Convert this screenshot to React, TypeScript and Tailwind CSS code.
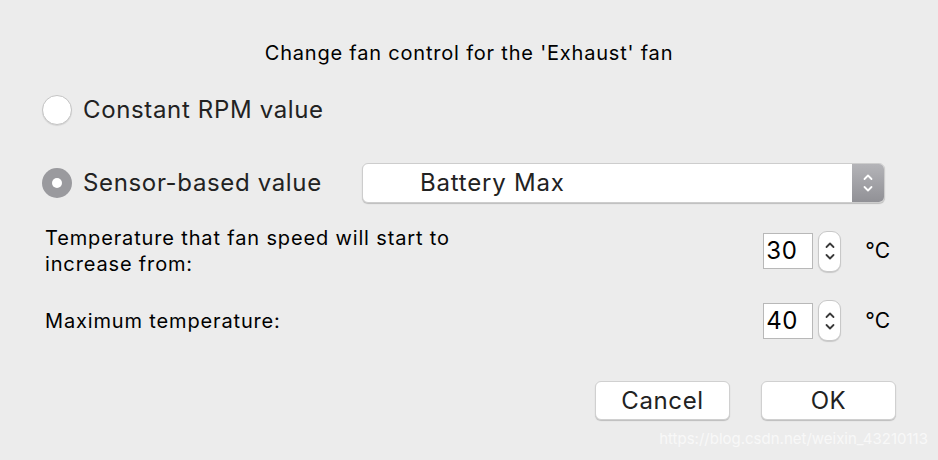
import { useState } from 'react';

function Stepper({ className = '' }: { className?: string }) {
  return (
    <div className={`flex items-center justify-center ${className}`}>
      <svg width="12" height="26" viewBox="0 0 12 26" fill="none" strokeLinecap="round" strokeLinejoin="round">
        <path d="M2.5 9 L6 5.5 L9.5 9" stroke="currentColor" strokeWidth="1.8" />
        <path d="M2.5 17 L6 20.5 L9.5 17" stroke="currentColor" strokeWidth="1.8" />
      </svg>
    </div>
  );
}

function NumberField({ value }: { value: string }) {
  return (
    <div className="flex items-center">
      <div className="w-[50px] h-[36px] bg-white border border-[#b8b8b8] flex items-center pl-[2px] text-[24px] tracking-[0.5px] text-black">
        {value}
      </div>
      <Stepper className="ml-[5px] w-[23px] h-[41px] rounded-[9px] bg-white border border-[#c8c8c8] shadow-[0_1px_1px_rgba(0,0,0,0.15)] text-[#3a3a3a]" />
      <span className="ml-[24px] text-[21px] text-black">°C</span>
    </div>
  );
}

export default function App() {
  const [mode, setMode] = useState<'constant' | 'sensor'>('sensor');

  return (
    <div
      className="w-[938px] h-[460px] bg-[#ececec] text-[#1d1d1d] relative overflow-hidden"
      style={{ fontFamily: 'Inter, "Noto Sans", sans-serif' }}
    >
      {/* Title */}
      <div className="pt-[39px] text-center text-[20px] leading-[28px] tracking-[0.8px] text-black">
        Change fan control for the 'Exhaust' fan
      </div>

      {/* Constant RPM */}
      <button
        onClick={() => setMode('constant')}
        className="mt-[28px] ml-[42px] flex items-center gap-[11px]"
      >
        <span
          className={`w-[30px] h-[30px] rounded-full flex items-center justify-center ${
            mode === 'constant' ? 'bg-[#9a9a9e]' : 'bg-white border border-[#c4c4c4] shadow-[0_1px_1px_rgba(0,0,0,0.1)]'
          }`}
        >
          {mode === 'constant' && <span className="w-[10px] h-[10px] rounded-full bg-white" />}
        </span>
        <span className="text-[24px] leading-[30px] tracking-[0.65px] text-[#222]">Constant RPM value</span>
      </button>

      {/* Sensor based */}
      <div className="mt-[38px] ml-[42px] mr-[53px] flex items-center">
        <button onClick={() => setMode('sensor')} className="flex items-center gap-[11px]">
          <span
            className={`w-[30px] h-[30px] rounded-full flex items-center justify-center ${
              mode === 'sensor' ? 'bg-[#9a9a9e]' : 'bg-white border border-[#c4c4c4]'
            }`}
          >
            {mode === 'sensor' && <span className="w-[10px] h-[10px] rounded-full bg-white" />}
          </span>
          <span className="text-[24px] leading-[30px] tracking-[0.65px] text-[#222]">Sensor-based value</span>
        </button>
        <div className="ml-auto w-[523px] h-[40px] flex rounded-[6px] bg-white border border-[#cdcdcd] shadow-[0_1px_1px_rgba(0,0,0,0.2)] overflow-hidden">
          <div className="flex-1 flex items-center pl-[57px] text-[24px] tracking-[0.8px] text-[#222]">Battery Max</div>
          <Stepper className="w-[32px] bg-gradient-to-b from-[#b4b4b8] to-[#919196] text-white" />
        </div>
      </div>

      {/* Start temperature */}
      <div className="mt-[22px] ml-[45px] mr-[48px] flex items-center justify-between">
        <div className="text-[20px] leading-[26px] tracking-[0.85px] text-black">
          Temperature that fan speed will start to
          <br />
          increase from:
        </div>
        <NumberField value="30" />
      </div>

      {/* Max temperature */}
      <div className="mt-[23px] ml-[45px] mr-[48px] flex items-center justify-between">
        <div className="text-[20px] leading-[26px] tracking-[0.85px] text-black">Maximum temperature:</div>
        <NumberField value="40" />
      </div>

      {/* Buttons */}
      <div className="mt-[40px] mr-[42px] flex justify-end gap-[31px]">
        <button className="w-[135px] h-[39px] rounded-[6px] bg-white border border-[#d0d0d0] shadow-[0_1px_1px_rgba(0,0,0,0.2)] text-[24px] tracking-[0.6px] text-[#222]">
          Cancel
        </button>
        <button className="w-[135px] h-[39px] rounded-[6px] bg-white border border-[#d0d0d0] shadow-[0_1px_1px_rgba(0,0,0,0.2)] text-[24px] tracking-[0.6px] text-[#222]">
          OK
        </button>
      </div>

      {/* Watermark */}
      <div className="absolute right-[10px] bottom-[10px] text-[15px] text-[#f8f8f8]">
        https://blog.csdn.net/weixin_43210113
      </div>
    </div>
  );
}
